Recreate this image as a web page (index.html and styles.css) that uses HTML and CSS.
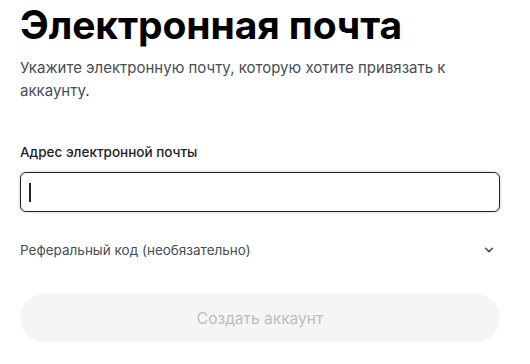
FILE: index.html
```html
<!DOCTYPE html>
<html lang="ru">
<head>
<meta charset="utf-8">
<link rel="stylesheet" href="styles.css">
</head>
<body>
<main class="page">
  <h1 class="title">Электронная почта</h1>
  <p class="subtitle">Укажите электронную почту, которую хотите привязать к аккаунту.</p>
  <label class="label" for="email">Адрес электронной почты</label>
  <div class="field">
    <span class="caret"></span>
  </div>
  <div class="referral">
    <span>Реферальный код (необязательно)</span>
    <svg class="chevron" width="10" height="6" viewBox="0 0 10 6"><path d="M1.5 1.2 L5 4.6 L8.5 1.2" fill="none" stroke="#474D57" stroke-width="1.5" stroke-linecap="round" stroke-linejoin="round"/></svg>
  </div>
  <button class="submit" type="button">Создать аккаунт</button>
</main>
</body>
</html>
```
FILE: styles.css
```css
* { box-sizing: border-box; }
html, body { margin: 0; background: #fff; }
body { font-family: Inter, "Noto Sans", "Liberation Sans", sans-serif; color: #1E2329; }
.page { padding: 0 30px 0 20px; display: flex; flex-direction: column; }
.title { margin: 2px 0 0; font-size: 39px; line-height: 46px; font-weight: 700; letter-spacing: -0.1px; color: #000; }
.subtitle { margin: 8px 0 0; font-size: 15px; line-height: 23px; color: #474D57; max-width: 440px; }
.label { margin-top: 40px; font-size: 13.5px; line-height: 20px; font-weight: 500; color: #1E2329; }
.field { margin-top: 10px; height: 40px; border: 1px solid #1E2329; border-radius: 6px; box-shadow: 0 0 0 1.5px #E6E8EA; display: flex; align-items: center; padding-left: 8px; }
.caret { width: 1.5px; height: 19px; background: #1E2329; }
.referral { margin-top: 28px; display: flex; justify-content: space-between; align-items: center; font-size: 13.5px; line-height: 20px; color: #474D57; padding-right: 6px; }
.chevron { display: block; }
.submit { margin-top: 34px; height: 48px; border: none; border-radius: 24px; background: #F5F5F5; color: #B7BDC6; font-family: inherit; font-size: 15.5px; font-weight: 400; }
```
